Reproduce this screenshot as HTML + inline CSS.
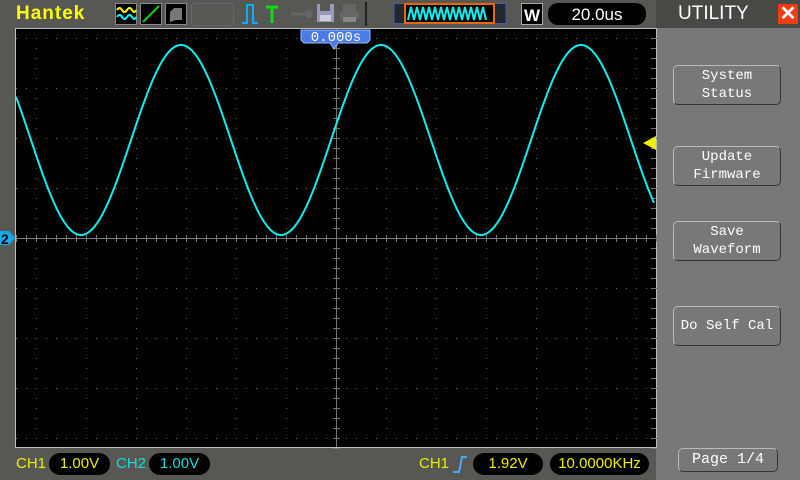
<!DOCTYPE html>
<html><head><meta charset="utf-8"><style>
body{margin:0;width:800px;height:480px;overflow:hidden;background:#575854;font-family:"Liberation Sans",sans-serif;position:relative}
.a{position:absolute}
.btn{position:absolute;left:673px;width:108px;height:40px;border:1px solid #bbb;border-right-color:#333;border-bottom-color:#333;border-radius:5px;color:#fff;font-family:"Liberation Mono",monospace;font-size:14px;line-height:18px;text-align:center;box-sizing:border-box;display:flex;align-items:center;justify-content:center;white-space:nowrap}
.pill{position:absolute;background:#000;border-radius:12px;height:22px;line-height:22px;text-align:center;font-size:15px}
</style></head><body>
<div class="a" style="left:656px;top:0;width:144px;height:480px;background:#787878"></div>
<div class="a" style="left:656px;top:0;width:144px;height:28px;background:#474944"></div>
<div class="a" style="left:678px;top:3px;color:#fff;font-size:19px">UTILITY</div>
<div class="a" style="left:778px;top:4px;width:20px;height:20px;background:#f03c10;color:#fff;font-size:20px;line-height:20px;text-align:center;font-weight:bold">✕</div>
<div class="a" style="left:16px;top:3px;color:#ffff00;font-size:19px;font-weight:bold;letter-spacing:1px">Hantek</div>
<svg class="a" style="left:0;top:0" width="656" height="28">
<rect x="115.5" y="3.5" width="21" height="21" fill="#000" stroke="#888"/>
<path d="M117 10q2.5-4 5 0t5 0t5 0t4 0" stroke="#ff0" stroke-width="2" fill="none"/>
<path d="M117 17q2.5-4 5 0t5 0t5 0t4 0" stroke="#0ff" stroke-width="2" fill="none"/>
<rect x="140.5" y="3.5" width="21" height="21" fill="#000" stroke="#888"/>
<path d="M143 22L159 6" stroke="#1c1" stroke-width="2"/>
<rect x="165.5" y="3.5" width="21" height="21" fill="#000" stroke="#888"/>
<path d="M170 22V12l4-4h8v12h-6z" fill="#777"/>
<rect x="191.5" y="3.5" width="42" height="22" rx="3" fill="none" stroke="#666"/>
<path d="M242 23h5V5h6v18h5" stroke="#1af" stroke-width="2" fill="none"/>
<path d="M266 7h12M272 7v16" stroke="#1d1" stroke-width="3"/>
<path d="M291 14h14" stroke="#666" stroke-width="3"/><circle cx="309" cy="14" r="4" fill="#666"/>
<rect x="317" y="4" width="17" height="18" fill="#99b" /><rect x="320" y="4" width="10" height="7" fill="#575854"/><rect x="320" y="15" width="11" height="6" fill="#ccd"/>
<rect x="343" y="4" width="13" height="7" fill="#666"/><rect x="340" y="11" width="19" height="8" fill="#666"/><rect x="343" y="17" width="13" height="5" fill="#888"/>
<path d="M366 2v24" stroke="#222" stroke-width="2"/>
<rect x="394" y="3.5" width="112" height="20" fill="#1a2a30" stroke="#55a"/>
<rect x="405" y="4" width="89" height="19" fill="#000" stroke="#e60" stroke-width="2"/>
<path d="M408 20l3-13 3 13 3-13 3 13 3-13 3 13 3-13 3 13 3-13 3 13 3-13 3 13 3-13 3 13 3-13 3 13 3-13 3 13 3-13 3 13 3-13 3 13 3-13 3 13 3-13 3 13" stroke="#1ee" stroke-width="2" fill="none"/>
<rect x="521.5" y="3.5" width="21" height="21" fill="#000" stroke="#aaa"/>
<text x="532" y="21" fill="#fff" font-size="17" font-weight="bold" text-anchor="middle" font-family="Liberation Sans">W</text>
<rect x="548" y="3" width="98" height="22" rx="10" fill="#000"/>
<text x="597" y="20" fill="#fff" font-size="17" text-anchor="middle" font-family="Liberation Sans">20.0us</text>
</svg>
<svg class="a" style="left:0;top:0" width="800" height="480" id="scr">
<rect x="15.5" y="28.5" width="641" height="419" fill="#000" stroke="#bbb"/>
<g id="grid"></g>
<polyline id="w" fill="none" stroke="#1ee" stroke-width="2"/>
<path d="M301 30h69v10l-3 3h-29l-4 6-4-6h-26l-3-3z" fill="#4a7be8" stroke="#9bf"/>
<text x="336" y="41" fill="#fff" font-size="14" text-anchor="middle" font-family="Liberation Mono">0.000s</text>
<path d="M0 231h9l6 7-6 7H0z" fill="#1ae"/><text x="1" y="244" fill="#000" font-size="14" font-weight="bold" font-family="Liberation Sans">2</text>
<path d="M643 143l13-7v14z" fill="#ee0"/>
</svg>
<div class="btn" style="top:65px">System<br>Status</div>
<div class="btn" style="top:146px">Update<br>Firmware</div>
<div class="btn" style="top:221px">Save<br>Waveform</div>
<div class="btn" style="top:306px">Do Self Cal</div>
<div class="btn" style="top:448px;height:24px;left:678px;width:100px;font-size:15px">Page 1/4</div>
<div class="a" style="left:16px;top:455px;color:#ee0;font-size:15px">CH1</div>
<div class="pill" style="left:49px;top:453px;width:61px;color:#ee0">1.00V</div>
<div class="a" style="left:116px;top:455px;color:#1dd;font-size:15px">CH2</div>
<div class="pill" style="left:149px;top:453px;width:61px;color:#1dd">1.00V</div>
<div class="a" style="left:419px;top:455px;color:#ee0;font-size:15px">CH1</div>
<svg class="a" style="left:452px;top:455px" width="16" height="18"><path d="M1 17h6l3-15h5" stroke="#4af" stroke-width="2" fill="none"/></svg>
<div class="pill" style="left:473px;top:453px;width:70px;color:#ee0">1.92V</div>
<div class="pill" style="left:550px;top:453px;width:99px;color:#ee0">10.0000KHz</div>
<script>
var g=document.getElementById('grid'),s='';
for(var x=36;x<=636;x+=50)for(var y=38;y<=438;y+=10)s+='<rect x="'+x+'" y="'+y+'" width="1" height="1" fill="#666"/>';
for(var y=38;y<=438;y+=50)for(var x=16;x<=656;x+=10)s+='<rect x="'+x+'" y="'+y+'" width="1" height="1" fill="#666"/>';
s+='<path d="M16 238.5h640M336.5 29v418" stroke="#777"/>';
for(var x=16;x<=656;x+=10)s+='<path d="M'+(x+.5)+' 235v7" stroke="#777"/>';
for(var y=38;y<=448;y+=10)s+='<path d="M333 '+(y+.5)+'h7" stroke="#777"/>';
for(var y=38;y<=448;y+=10)s+='<path d="M651 '+(y+.5)+'h5" stroke="#777"/>';
g.innerHTML=s;
var p=[];for(var x=16;x<=654;x++){p.push(x+','+(140+95*Math.cos(2*Math.PI*(x-81)/200)).toFixed(1));}
document.getElementById('w').setAttribute('points',p.join(' '));
</script>
</body></html>
